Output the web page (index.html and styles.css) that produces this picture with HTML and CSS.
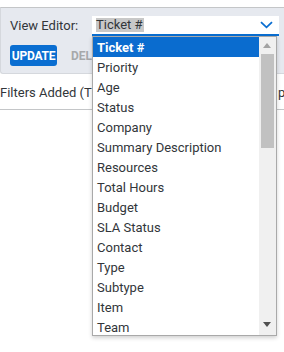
FILE: index.html
```html
<!DOCTYPE html>
<html>
<head>
<meta charset="utf-8">
<link rel="stylesheet" href="styles.css">
</head>
<body>
<div class="page">
  <div class="panel">
    <div class="row1">
      <span class="label">View Editor:</span>
      <div class="select">
        <span class="sel-text">Ticket #</span>
        <svg class="chev" width="13" height="8" viewBox="0 0 13 8"><path d="M1 1.2 L6.5 6.3 L12 1.2" fill="none" stroke="#0a6ed1" stroke-width="1.8"/></svg>
      </div>
    </div>
    <div class="row2">
      <button class="btn-update">UPDATE</button>
      <span class="btn-delete">DELETE</span>
    </div>
  </div>
  <div class="filters">
    <span class="filters-text">Filters Added (These filters apply to this view)</span>
    <span class="filters-more">preview</span>
  </div>

  <div class="dropdown">
    <ul class="list">
      <li class="active">Ticket #</li>
      <li>Priority</li>
      <li>Age</li>
      <li>Status</li>
      <li>Company</li>
      <li>Summary Description</li>
      <li>Resources</li>
      <li>Total Hours</li>
      <li>Budget</li>
      <li>SLA Status</li>
      <li>Contact</li>
      <li>Type</li>
      <li>Subtype</li>
      <li>Item</li>
      <li>Team</li>
    </ul>
    <div class="scrollbar">
      <div class="arrow up"></div>
      <div class="thumb"></div>
      <div class="arrow down"></div>
    </div>
  </div>
</div>
</body>
</html>
```

FILE: styles.css
```css
html, body {
  margin: 0;
  padding: 0;
  background: #ffffff;
}
body {
  font-family: Roboto, "Liberation Sans", Arial, sans-serif;
  font-size: 13px;
  color: #32363a;
  width: 284px;
  height: 352px;
  overflow: hidden;
}
.page {
  position: relative;
  width: 284px;
  height: 352px;
  padding-top: 7px;
  box-sizing: border-box;
}
.panel {
  background: #e6e9ef;
  border-top: 1px solid #c4c6c8;
  border-bottom: 1px solid #d5d8dd;
  border-left: 1px solid #d5d8dd;
  border-bottom-left-radius: 3px;
  height: 65px;
  box-sizing: content-box;
}
.row1 {
  display: flex;
  align-items: center;
  padding-top: 8px;
  height: 20px;
}
.label {
  margin-left: 9px;
  width: 82px;
  line-height: 20px;
  color: #32363a;
}
.select {
  position: relative;
  width: 187px;
  height: 20px;
  background: #ffffff;
  border-bottom: 2px solid #0a6ed1;
  box-sizing: border-box;
  display: flex;
  align-items: center;
}
.sel-text {
  margin-left: 4px;
  background: #c8c8c8;
  color: #32363a;
  line-height: 14px;
  padding: 0 1px 0 0;
}
.chev {
  position: absolute;
  right: 6px;
  top: 5px;
}
.row2 {
  display: flex;
  align-items: center;
  padding-top: 9px;
}
.btn-update {
  margin-left: 9px;
  height: 21px;
  width: 47px;
  border: none;
  border-radius: 3px;
  background: #0a6ed1;
  color: #ffffff;
  font-family: Roboto, "Liberation Sans", Arial, sans-serif;
  font-size: 12px;
  font-weight: 700;
  padding: 0;
  letter-spacing: -0.2px;
}
.btn-delete {
  margin-left: 14px;
  color: #a6a8aa;
  font-size: 12px;
  font-weight: 700;
}
.filters {
  border-bottom: 1px solid #c4c6c8;
  height: 36px;
  box-sizing: border-box;
  display: flex;
  align-items: center;
  overflow: hidden;
  padding-top: 2px;
}
.filters-text {
  flex: 0 0 278px;
  white-space: nowrap;
  overflow: hidden;
}
.filters-more {
  flex: 0 0 auto;
  white-space: nowrap;
}
.dropdown {
  position: absolute;
  left: 92px;
  top: 36px;
  width: 185px;
  height: 300px;
  border: 1px solid #a9a9a9;
  box-sizing: border-box;
  background: #ffffff;
  box-shadow: 0 2px 4px rgba(0,0,0,0.18);
  overflow: hidden;
}
.list {
  list-style: none;
  margin: 0;
  padding: 0;
  margin-right: 17px;
}
.list li {
  height: 20px;
  line-height: 21px;
  padding-left: 4px;
  color: #32363a;
  white-space: nowrap;
}
.list li.active {
  background: #0a6ccf;
  color: #ffffff;
  font-weight: 700;
}
.scrollbar {
  position: absolute;
  top: 0;
  right: 0;
  width: 17px;
  height: 100%;
  background: #f0f0f0;
}
.arrow {
  position: absolute;
  left: 4px;
  width: 0;
  height: 0;
  border-left: 4.5px solid transparent;
  border-right: 4.5px solid transparent;
}
.arrow.up {
  top: 6px;
  border-bottom: 5px solid #a3a3a3;
}
.arrow.down {
  bottom: 8px;
  border-top: 5px solid #505050;
}
.thumb {
  position: absolute;
  top: 17px;
  left: 2px;
  width: 13px;
  height: 94px;
  background: #c1c1c1;
}
```
